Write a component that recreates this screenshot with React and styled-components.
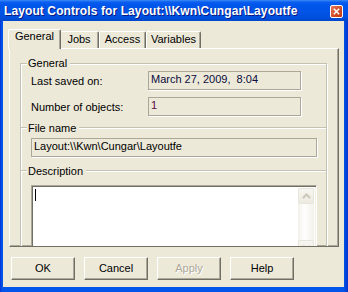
import React from "react";
import styled, { createGlobalStyle } from "styled-components";

const GlobalStyle = createGlobalStyle`
  html, body {
    margin: 0;
    padding: 0;
    background: #ece9d8;
  }
  body {
    font-family: "Liberation Sans", Arial, sans-serif;
    font-size: 11px;
    color: #000;
  }
`;

const Frame = styled.div`
  width: 348px;
  height: 292px;
  box-sizing: border-box;
  display: flex;
  flex-direction: column;
  background: linear-gradient(90deg, #0831d9 0px, #0055ea 2px, #0055ea 344px, #0043cf 346px, #0831d9 348px);
  padding: 0 4px 5px 3px;
`;

const TitleBar = styled.div`
  height: 21px;
  margin: 0 -4px 0 -3px;
  padding: 0 5px 0 4px;
  display: flex;
  align-items: center;
  background: linear-gradient(
    180deg,
    #3d8cf7 0px,
    #0a5ff0 2px,
    #0055ea 5px,
    #0054e6 12px,
    #0050de 17px,
    #0046cc 21px
  );
`;

const Title = styled.span`
  flex: 1;
  color: #fff;
  font-weight: bold;
  font-size: 12px;
  letter-spacing: 0.1px;
  text-shadow: 1px 1px 0 #0a1883;
  white-space: nowrap;
  margin-top: 1px;
`;

const CloseBtn = styled.div`
  position: relative;
  z-index: 5;
  flex: 0 0 13px;
  width: 13px;
  height: 13px;
  box-sizing: border-box;
  margin-top: 1px;
  border: 1px solid #ffffff;
  border-radius: 2px;
  background-color: #d4502a;
  background-image: linear-gradient(135deg, #e57b5c 0%, #d4502a 50%, #bf3a14 100%);
  color: #fff;
  display: flex;
  align-items: center;
  justify-content: center;
`;

const Body = styled.div`
  flex: 1;
  background: #ece9d8;
  padding: 8px 0 0 6px;
  display: flex;
  flex-direction: column;
`;

const TabRow = styled.div`
  display: flex;
  align-items: flex-end;
  height: 19px;
  padding-left: 1px;
  position: relative;
  z-index: 2;
`;

const Tab = styled.div`
  width: ${({ $w }) => $w}px;
  height: ${({ $active }) => ($active ? 20 : 17)}px;
  margin: ${({ $active }) => ($active ? "0 -2px -1px -2px" : "0")};
  padding-top: ${({ $active }) => ($active ? 0 : 1)}px;
  box-sizing: border-box;
  background: #ece9d8;
  border-top: 1px solid #fff;
  border-left: 1px solid #fff;
  border-right: 1px solid #716f64;
  box-shadow: inset -1px 0 0 #aca899;
  border-radius: 2px 2px 0 0;
  text-align: center;
  line-height: 13px;
  position: relative;
  z-index: ${({ $active }) => ($active ? 3 : 1)};
`;

const Panel = styled.div`
  width: 330px;
  height: 199px;
  box-sizing: border-box;
  border-top: 1px solid #fff;
  border-left: 1px solid #fff;
  border-right: 1px solid #716f64;
  border-bottom: 1px solid #716f64;
  box-shadow: inset -1px -1px 0 #aca899;
  padding: 0 0 0 10px;
  overflow: hidden;
`;

const Group = styled.fieldset`
  margin: 8px 0 0 0;
  width: 307px;
  box-sizing: border-box;
  height: 240px;
  border: 1px solid #c4c2b4;
  box-shadow: inset 1px 1px 0 #fff, 1px 1px 0 #fff;
  padding: 1px 9px 0 10px;
  min-width: 0;
`;

const Legend = styled.legend`
  margin-left: -4px;
  padding: 0 3px 0 1px;
  line-height: 13px;
  background: #ece9d8;
`;

const InfoGrid = styled.div`
  display: grid;
  grid-template-columns: 117px 153px;
  grid-auto-rows: 19px;
  row-gap: 7px;
  align-items: center;
`;

const Label = styled.span`
  white-space: nowrap;
`;

const ReadOnly = styled.div`
  height: 19px;
  width: ${({ $w }) => $w}px;
  box-sizing: border-box;
  border: 1px solid #aca899;
  box-shadow: 1px 1px 0 #fff;
  padding: 1px 0 0 2px;
  line-height: 13px;
  color: ${({ $color }) => $color || "#000"};
  white-space: nowrap;
  overflow: hidden;
`;

const SectionHeader = styled.div`
  display: flex;
  align-items: center;
  height: 14px;
  margin: ${({ $top }) => $top}px -9px 0 -10px;
  line-height: 13px;

  &::before,
  &::after {
    content: "";
    border-top: 1px solid #c4c2b4;
    border-bottom: 1px solid #fff;
  }
  &::before {
    width: 6px;
    margin-right: 1px;
  }
  &::after {
    flex: 1;
    margin-left: 3px;
  }
`;

const FieldWrap = styled.div`
  margin-top: ${({ $top }) => $top}px;
`;

const TextArea = styled.div`
  width: 286px;
  height: 72px;
  box-sizing: border-box;
  margin-top: 7px;
  border-top: 1px solid #aca899;
  border-left: 1px solid #aca899;
  border-right: 1px solid #fff;
  border-bottom: 1px solid #fff;
  box-shadow: inset 1px 1px 0 #716f64, inset -1px -1px 0 #f1efe2;
  background: #fff;
  display: flex;
  padding: 2px 2px 0 3px;
`;

const Caret = styled.div`
  width: 1px;
  height: 12px;
  background: #000;
  margin-top: 1px;
`;

const ScrollBar = styled.div`
  margin-left: auto;
  width: 16px;
  background: linear-gradient(90deg, #f3f1ea 0%, #fefefd 40%, #f3f1ea 100%);
  display: flex;
  flex-direction: column;
  justify-content: space-between;
`;

const ScrollBtn = styled.div`
  width: 16px;
  height: 16px;
  box-sizing: border-box;
  border: 1px solid #e8e6dc;
  border-radius: 2px;
  background: linear-gradient(180deg, #f7f6f0 0%, #eceae0 100%);
  display: flex;
  align-items: center;
  justify-content: center;
`;

const ButtonRow = styled.div`
  display: flex;
  gap: 9px;
  margin: 10px 0 0 2px;
`;

const Button = styled.div`
  width: 64px;
  height: 23px;
  box-sizing: border-box;
  border-top: 1px solid #fff;
  border-left: 1px solid #fff;
  border-right: 1px solid #716f64;
  border-bottom: 1px solid #716f64;
  box-shadow: inset -1px -1px 0 #aca899;
  display: flex;
  align-items: center;
  justify-content: center;
  padding-bottom: 1px;
  color: ${({ $disabled }) => ($disabled ? "#aca899" : "#000")};
  text-shadow: ${({ $disabled }) => ($disabled ? "1px 1px 0 #fff" : "none")};
`;

const Chevron = ({ up }) => (
  <svg width="9" height="6" viewBox="0 0 9 6">
    <path
      d={up ? "M1 5 L4.5 1.5 L8 5" : "M1 1 L4.5 4.5 L8 1"}
      fill="none"
      stroke="#c9c7ba"
      strokeWidth="2"
    />
  </svg>
);

const tabs = [
  { name: "General", w: 49, active: true },
  { name: "Jobs", w: 40 },
  { name: "Access", w: 47 },
  { name: "Variables", w: 55 },
];

export default function App() {
  return (
    <>
      <GlobalStyle />
      <Frame>
        <TitleBar>
          <Title>Layout Controls for Layout:\\Kwn\Cungar\Layoutfe</Title>
          <CloseBtn>
            <svg width="7" height="7" viewBox="0 0 7 7">
              <path d="M0.8 0.8 L6.2 6.2 M6.2 0.8 L0.8 6.2" stroke="currentColor" strokeWidth="1.5" />
            </svg>
          </CloseBtn>
        </TitleBar>
        <Body>
          <TabRow>
            {tabs.map((t) => (
              <Tab key={t.name} $w={t.active ? t.w + 4 : t.w} $active={t.active}>
                {t.name}
              </Tab>
            ))}
          </TabRow>
          <Panel>
            <Group>
              <Legend>General</Legend>
              <InfoGrid>
                <Label>Last saved on:</Label>
                <ReadOnly $w={153} $color="#0a0a3c">March 27, 2009,&nbsp; 8:04</ReadOnly>
                <Label>Number of objects:</Label>
                <ReadOnly $w={153} $color="#5a0a46">1</ReadOnly>
              </InfoGrid>
              <SectionHeader $top={5}>File name</SectionHeader>
              <FieldWrap $top={3}>
                <ReadOnly $w={286}>Layout:\\Kwn\Cungar\Layoutfe</ReadOnly>
              </FieldWrap>
              <SectionHeader $top={7}>Description</SectionHeader>
              <TextArea>
                <Caret />
                <ScrollBar>
                  <ScrollBtn>
                    <Chevron up />
                  </ScrollBtn>
                  <ScrollBtn>
                    <Chevron />
                  </ScrollBtn>
                </ScrollBar>
              </TextArea>
            </Group>
          </Panel>
          <ButtonRow>
            <Button>OK</Button>
            <Button>Cancel</Button>
            <Button $disabled>Apply</Button>
            <Button>Help</Button>
          </ButtonRow>
        </Body>
      </Frame>
    </>
  );
}
